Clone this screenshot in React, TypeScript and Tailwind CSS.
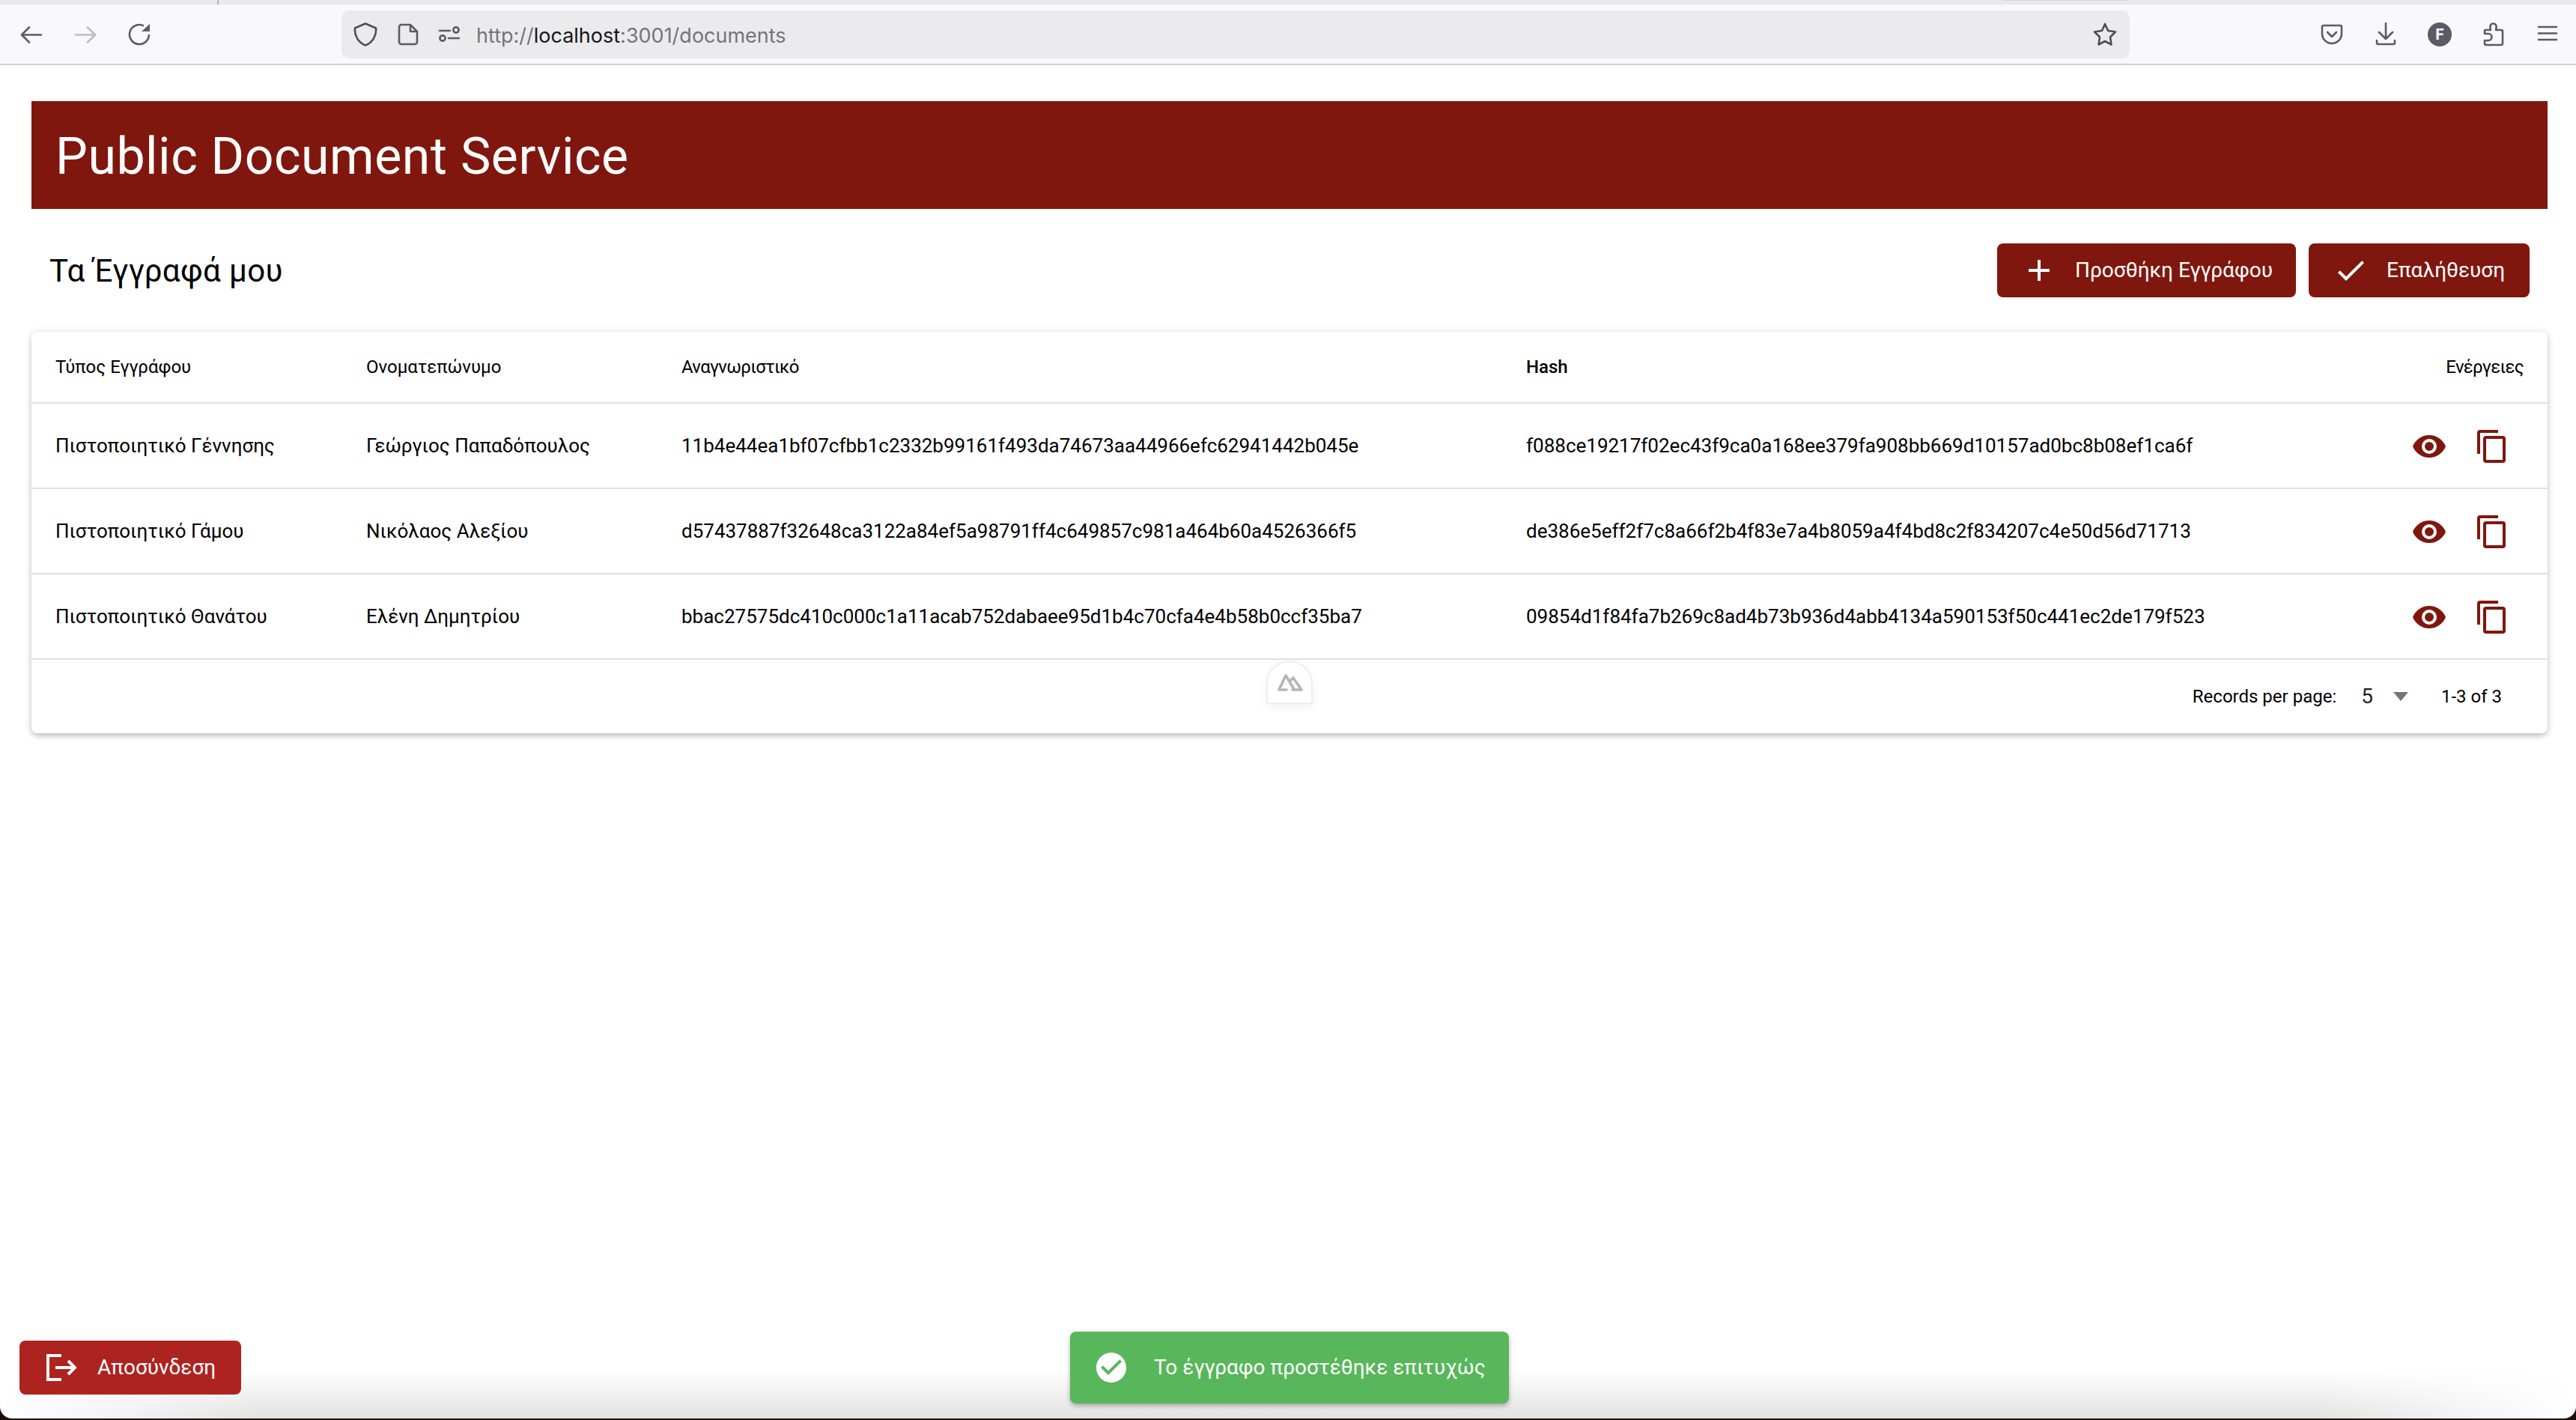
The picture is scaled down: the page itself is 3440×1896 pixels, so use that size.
import React from 'react';

const rows = [
  {
    type: 'Πιστοποιητικό Γέννησης',
    name: 'Γεώργιος Παπαδόπουλος',
    id: '11b4e44ea1bf07cfbb1c2332b99161f493da74673aa44966efc62941442b045e',
    hash: 'f088ce19217f02ec43f9ca0a168ee379fa908bb669d10157ad0bc8b08ef1ca6f',
  },
  {
    type: 'Πιστοποιητικό Γάμου',
    name: 'Νικόλαος Αλεξίου',
    id: 'd57437887f32648ca3122a84ef5a98791ff4c649857c981a464b60a4526366f5',
    hash: 'de386e5eff2f7c8a66f2b4f83e7a4b8059a4f4bd8c2f834207c4e50d56d71713',
  },
  {
    type: 'Πιστοποιητικό Θανάτου',
    name: 'Ελένη Δημητρίου',
    id: 'bbac27575dc410c000c1a11acab752dabaee95d1b4c70cfa4e4b58b0ccf35ba7',
    hash: '09854d1f84fa7b269c8ad4b73b936d4abb4134a590153f50c441ec2de179f523',
  },
];

// toolbar glyph, 32px box
function Glyph({ d, color = '#5b5b66' }: { d: string; color?: string }) {
  return (
    <svg viewBox="0 0 32 32" className="w-8 h-8 shrink-0" fill="none" stroke={color} strokeWidth="2.6" strokeLinecap="round" strokeLinejoin="round">
      <path d={d} />
    </svg>
  );
}

// material design icon, 48px box
function Mdi({ d, className }: { d: string; className: string }) {
  return (
    <svg viewBox="0 0 24 24" className={`w-12 h-12 shrink-0 ${className}`} fill="currentColor">
      <path d={d} />
    </svg>
  );
}

const mdiPlus = 'M19,13H13V19H11V13H5V11H11V5H13V11H19V13Z';
const mdiCheck = 'M21,7L9,19L3.5,13.5L4.91,12.09L9,16.17L19.59,5.59L21,7Z';
const mdiEye = 'M12,9A3,3 0 0,0 9,12A3,3 0 0,0 12,15A3,3 0 0,0 15,12A3,3 0 0,0 12,9M12,17A5,5 0 0,1 7,12A5,5 0 0,1 12,7A5,5 0 0,1 17,12A5,5 0 0,1 12,17M12,4.5C7,4.5 2.73,7.61 1,12C2.73,16.39 7,19.5 12,19.5C17,19.5 21.27,16.39 23,12C21.27,7.61 17,4.5 12,4.5Z';
const mdiCopy = 'M19,21H8V7H19M19,5H8A2,2 0 0,0 6,7V21A2,2 0 0,0 8,23H19A2,2 0 0,0 21,21V7A2,2 0 0,0 19,5M16,1H4A2,2 0 0,0 2,3V17H4V3H16V1Z';
const mdiCheckCircle = 'M12 2C6.5 2 2 6.5 2 12S6.5 22 12 22 22 17.5 22 12 17.5 2 12 2M10 17L5 12L6.41 10.59L10 14.17L17.59 6.58L19 8L10 17Z';

function Toolbar() {
  return (
    <div className="shrink-0">
      <div className="h-[6px] bg-[#e9e9eb] flex">
        <div className="ml-[290px] w-[2px] bg-[#b4b4b8]" />
        <div className="ml-[2382px] w-[166px] h-[1px] bg-[#d6d6d9]" />
      </div>
      <div className="h-[81px] bg-[#f9f9fb] border-b-2 border-[#cfcfd4] flex items-center pl-[26px]">
        <div className="flex gap-10">
          <Glyph d="M29 16.5H4M13 6.5L3 16.5L13 26.5" />
          <Glyph d="M3 16.5H28M19 6.5L29 16.5L19 26.5" color="#bdbdc2" />
          <svg viewBox="0 0 32 32" className="w-8 h-8 shrink-0" fill="none" stroke="#5b5b66" strokeWidth="2.6">
            <path d="M29 16A13 13 0 1 1 22 4.5" />
            <path d="M30 2V12H19Z" fill="#5b5b66" stroke="none" />
          </svg>
        </div>
        <div className="ml-[254px] w-[2388px] h-16 rounded-[10px] bg-[#ebebed] flex items-center pl-4 pr-[17px]">
          <Glyph d="M16 1.5L30 7.5C31 17 26 26.5 16 30.5C6 26.5 1 17 2 7.5Z" color="#4e4e56" />
          <div className="ml-[25px]">
            <Glyph d="M7 3H19L28 12V26A3 3 0 0 1 25 29H7A3 3 0 0 1 4 26V6A3 3 0 0 1 7 3ZM19 3V12H28" />
          </div>
          <svg viewBox="0 0 32 32" className="ml-[23px] w-8 h-8 shrink-0" fill="none" stroke="#5b5b66" strokeWidth="2.6" strokeLinecap="round">
            <path d="M3 11H17M15 21H29" />
            <circle cx="25" cy="10" r="3.6" />
            <circle cx="7" cy="21" r="3.6" />
          </svg>
          <div className="ml-[20px] pt-[5px] text-[27px] leading-8 font-[Inter,sans-serif] text-[#74747c] whitespace-nowrap">
            http://<span className="text-[#15141a]">localhost</span>:3001/documents
          </div>
          <div className="ml-auto">
            <Glyph d="M16 2L20 11L30 12.5L23 19.5L24.5 29.5L16 25L7.5 29.5L9 19.5L2 12.5L12 11Z" color="#4e4e56" />
          </div>
        </div>
        <div className="ml-[254px] flex gap-10 items-center">
          <svg viewBox="0 0 32 32" className="w-8 h-8 shrink-0" fill="none" stroke="#5b5b66" strokeWidth="2.6" strokeLinecap="round" strokeLinejoin="round">
            <path d="M5 4H27A2 2 0 0 1 29 6V15A13 13 0 0 1 3 15V6A2 2 0 0 1 5 4Z" />
            <path d="M10 13L16 19L22 13" />
          </svg>
          <Glyph d="M16 1V22M7 13L16 22L25 13M4 24V27A2 2 0 0 0 6 29H26A2 2 0 0 0 28 27V24" />
          <div className="w-8 h-8 rounded-full bg-[#5b5b66] flex items-center justify-center text-white text-[20px] font-bold font-[Inter,sans-serif]">F</div>
          <Glyph d="M5 10H12C10 3 13 1.5 15.5 1.5C18 1.5 21 3 19 10H26A2 2 0 0 1 28 12V28A2 2 0 0 1 26 30H6A2 2 0 0 1 4 28V24H9A4.5 4.5 0 0 0 9 15H4V11A1 1 0 0 1 5 10Z" />
          <Glyph d="M4 6H28M4 14.5H28M4 23H28" />
        </div>
      </div>
    </div>
  );
}

function RedButton({ icon, label, className }: { icon: string; label: string; className: string }) {
  return (
    <button className={`h-[72px] rounded-lg bg-[#7f170e] text-white flex items-center pl-8 gap-6 text-[28px] ${className}`}>
      <Mdi d={icon} className="text-white" />
      <span>{label}</span>
    </button>
  );
}

export default function App() {
  return (
    <div className="relative h-[1896px] w-[3440px] overflow-hidden bg-[#1c0f0a] flex flex-col font-[Roboto,sans-serif]">
      <Toolbar />
      <div className="relative h-[1807px] shrink-0 bg-white rounded-b-2xl overflow-hidden pl-[42px] pr-[38px] pt-12">
        <div className="absolute inset-x-0 bottom-0 h-16 bg-gradient-to-t from-[#e2e2e2] to-white [mask-image:linear-gradient(to_right,transparent,black_10%,black_90%,transparent)]" />
        {/* Banner */}
        <div className="relative h-36 bg-[#7f170e] flex items-center pl-8 pt-1 text-[68px] tracking-[0.5px] text-white leading-none">
          Public Document Service
        </div>
        <div className="relative mt-[46px] h-[72px] flex items-center px-6">
          <h1 className="text-[42px] tracking-[0.4px] text-black">Τα Έγγραφά μου</h1>
          <div className="ml-auto flex gap-[17px]">
            <RedButton icon={mdiPlus} label="Προσθήκη Εγγράφου" className="w-[399px]" />
            <RedButton icon={mdiCheck} label="Επαλήθευση" className="w-[295px]" />
          </div>
        </div>
        {/* Table card */}
        <div className="relative mt-[46px] rounded-lg bg-white shadow-[0_4px_8px_-1px_rgba(0,0,0,0.25),0_0_12px_rgba(0,0,0,0.08)]">
          <table className="w-full table-fixed border-separate border-spacing-0 text-left text-black">
            <colgroup>
              <col className="w-[415px]" />
              <col className="w-[421px]" />
              <col className="w-[1128px]" />
              <col />
              <col className="w-[280px]" />
            </colgroup>
            <thead>
              <tr className="h-[96px] text-[24px]">
                <th className="pl-8 font-normal border-b-2 border-[#e0e0e0]">Τύπος Εγγράφου</th>
                <th className="pl-8 font-normal border-b-2 border-[#e0e0e0]">Ονοματεπώνυμο</th>
                <th className="pl-8 font-normal tracking-[-0.7px] border-b-2 border-[#e0e0e0]">Αναγνωριστικό</th>
                <th className="pl-8 font-medium border-b-2 border-[#e0e0e0]">Hash</th>
                <th className="pr-8 font-normal tracking-[-0.7px] text-right border-b-2 border-[#e0e0e0]">Ενέργειες</th>
              </tr>
            </thead>
            <tbody>
              {rows.map((row) => (
                <tr key={row.id} className="h-[114px] text-[26px]">
                  <td className="pl-8 border-b-2 border-[#e0e0e0]">{row.type}</td>
                  <td className="pl-8 border-b-2 border-[#e0e0e0]">{row.name}</td>
                  <td className="pl-8 border-b-2 border-[#e0e0e0]">{row.id}</td>
                  <td className="pl-8 border-b-2 border-[#e0e0e0]">{row.hash}</td>
                  <td className="border-b-2 border-[#e0e0e0]">
                    <div className="flex justify-end gap-9 pr-[50px] pt-[2px]">
                      <Mdi d={mdiEye} className="text-[#7f170e]" />
                      <Mdi d={mdiCopy} className="text-[#7f170e]" />
                    </div>
                  </td>
                </tr>
              ))}
            </tbody>
          </table>
          <div className="h-[98px] flex items-center justify-end pr-[61px] text-[24px] text-black">
            <span>Records per page:</span>
            <span className="ml-[33px] text-[28px] text-[#222]">5</span>
            <span className="ml-[27px] w-0 h-0 border-x-[10px] border-x-transparent border-t-[12px] border-t-[#757575]" />
            <span className="ml-[44px]">1-3 of 3</span>
          </div>
        </div>
        {/* Nuxt devtools tab */}
        <div className="absolute left-[1691px] top-[795px] w-[62px] h-[58px] rounded-t-[31px] bg-white border-2 border-[#eeeeee] shadow-[0_4px_12px_rgba(0,0,0,0.06)] flex items-center justify-center">
          <svg viewBox="0 0 36 24" className="w-9 h-6" fill="none" stroke="#b5b5b5" strokeWidth="3.6" strokeLinecap="round" strokeLinejoin="round">
            <path d="M14 22H4L13 3L24 21" />
            <path d="M19 10L23 6L34 22H22" />
          </svg>
        </div>
        {/* Logout */}
        <button className="absolute left-[26px] top-[1703px] w-[296px] h-[72px] rounded-lg bg-[#ad2320] text-white text-[28px] flex items-center pl-9 gap-7">
          <svg viewBox="0 0 40 36" className="w-10 h-9 shrink-0" fill="none" stroke="#ffffff" strokeWidth="4">
            <path d="M20 2H2V34H20" />
            <path d="M12 18H37" />
            <path d="M29 9L38 18L29 27" />
          </svg>
          <span>Αποσύνδεση</span>
        </button>
        {/* Toast */}
        <div className="absolute left-[1429px] top-[1691px] w-[586px] h-24 rounded-lg bg-[#58b65b] text-white text-[28px] flex items-center pl-[31px] gap-[33px] shadow-[0_3px_6px_rgba(0,0,0,0.3)]">
          <Mdi d={mdiCheckCircle} className="text-white" />
          <span>Το έγγραφο προστέθηκε επιτυχώς</span>
        </div>
      </div>
    </div>
  );
}
